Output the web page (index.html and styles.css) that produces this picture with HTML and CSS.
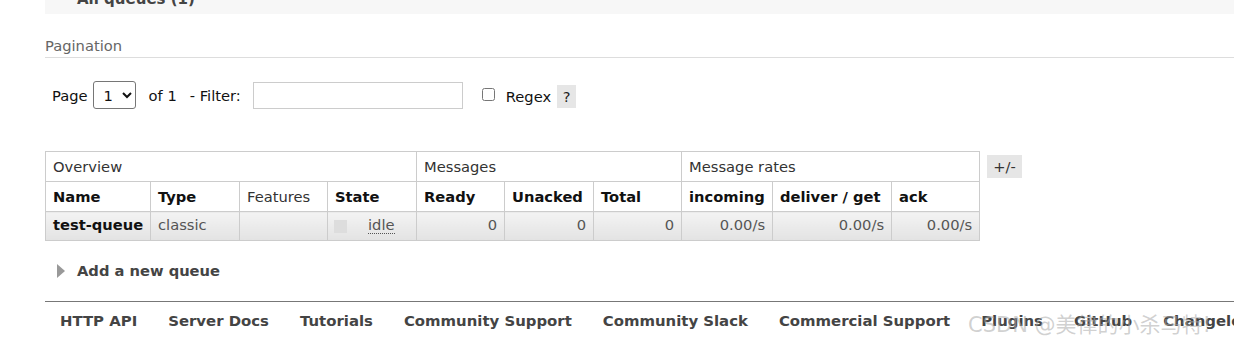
FILE: index.html
```html
<!DOCTYPE html>
<html lang="en">
<head>
    <meta charset="UTF-8">
    <title>Queues</title>
    <link rel="stylesheet" href="styles.css">
</head>
<body>
<div class="main">
    <div class="section-head">
        <h2><span class="tri-down"></span>All queues (1)</h2>
    </div>

    <h3 class="sub">Pagination</h3>

    <div class="filter-row">
        <span class="lbl">Page</span>
        <select class="page-sel">
            <option>1</option>
        </select>
        <span class="lbl of">of 1</span>
        <span class="lbl filt">- Filter:</span>
        <input type="text" class="filter-box">
        <input type="checkbox" class="regex-chk">
        <span class="lbl regex">Regex</span>
        <span class="help">?</span>
    </div>

    <div class="table-wrap">
        <table class="list">
            <colgroup>
                <col style="width:105px">
                <col style="width:89px">
                <col style="width:88px">
                <col style="width:89px">
                <col style="width:88px">
                <col style="width:89px">
                <col style="width:88px">
                <col style="width:91px">
                <col style="width:119px">
                <col style="width:88px">
            </colgroup>
            <thead>
            <tr class="group">
                <th colspan="4">Overview</th>
                <th colspan="3">Messages</th>
                <th colspan="3">Message rates</th>
            </tr>
            <tr class="cols">
                <th>Name</th>
                <th>Type</th>
                <th class="plain">Features</th>
                <th>State</th>
                <th>Ready</th>
                <th>Unacked</th>
                <th>Total</th>
                <th>incoming</th>
                <th>deliver / get</th>
                <th>ack</th>
            </tr>
            </thead>
            <tbody>
            <tr class="row">
                <td class="name">test-queue</td>
                <td>classic</td>
                <td></td>
                <td class="state"><span class="state-box"></span><abbr>idle</abbr></td>
                <td class="num">0</td>
                <td class="num">0</td>
                <td class="num">0</td>
                <td class="num">0.00/s</td>
                <td class="num">0.00/s</td>
                <td class="num">0.00/s</td>
            </tr>
            </tbody>
        </table>
        <span class="toggle">+/-</span>
    </div>

    <div class="add-queue"><span class="tri-right"></span>Add a new queue</div>

    <div class="footer">
        <a href="javascript:;">HTTP API</a>
        <a href="javascript:;">Server Docs</a>
        <a href="javascript:;">Tutorials</a>
        <a href="javascript:;">Community Support</a>
        <a href="javascript:;">Community Slack</a>
        <a href="javascript:;">Commercial Support</a>
        <a href="javascript:;">Plugins</a>
        <a href="javascript:;">GitHub</a>
        <a href="javascript:;">Changelog</a>
    </div>
</div>
<div class="watermark">CSDN @美律的小杀马特!</div>
</body>
</html>
```

FILE: styles.css
```css
*{
    margin:0;
    padding:0;
}
html,body{
    width:100%;
    height:100%;
    overflow:hidden;
}
body{
    font-family:"DejaVu Sans",Verdana,sans-serif;
    font-size:14.7px;
    color:#222;
    background:#fff;
    position:relative;
}
a{
    text-decoration:none;
}
.main{
    padding-left:45px;
}
.section-head{
    height:14px;
    overflow:hidden;
    background-color:#f7f7f7;
}
.section-head h2{
    font-size:15px;
    line-height:20px;
    margin-top:-11px;
    padding-left:32px;
    color:#444;
    position:relative;
}
.tri-down{
    position:absolute;
    left:11px;
    top:4px;
    border-left:5px solid transparent;
    border-right:5px solid transparent;
    border-top:7px solid #aaa;
}
.sub{
    margin-top:23px;
    font-size:14.7px;
    font-weight:normal;
    line-height:18px;
    color:#666;
    padding-bottom:2px;
    border-bottom:1px solid #ddd;
}
.filter-row{
    margin-top:23px;
    height:28px;
    display:flex;
    align-items:center;
    padding-left:7px;
}
.lbl{
    color:#111;
}
.page-sel{
    width:43px;
    height:28px;
    margin-left:5px;
    font-family:inherit;
    font-size:14.7px;
    padding-left:6px;
    border:1px solid #767676;
    border-radius:3px;
    background:#fff;
    color:#111;
}
.of{
    margin-left:13px;
}
.filt{
    margin-left:13px;
}
.filter-box{
    width:210px;
    height:27px;
    margin-left:12px;
    border:1px solid #ccc;
    box-sizing:border-box;
}
.regex-chk{
    width:13px;
    height:13px;
    margin-left:19px;
    margin-top:-2px;
}
.regex{
    margin-left:11px;
    margin-top:3px;
}
.help{
    margin-left:6px;
    margin-top:3px;
    width:19px;
    height:23px;
    line-height:23px;
    text-align:center;
    background-color:#e6e6e6;
    color:#222;
}
.table-wrap{
    margin-top:42px;
    display:flex;
    align-items:flex-start;
}
.list{
    border-collapse:collapse;
    table-layout:fixed;
    width:935px;
}
.list th,.list td{
    border:1px solid #ccc;
    padding:0 7px;
    text-align:left;
    white-space:nowrap;
    overflow:hidden;
}
.group th{
    height:29px;
    font-weight:normal;
    color:#333;
}
.cols th{
    height:28px;
    padding-bottom:1px;
    font-weight:bold;
    color:#111;
}
.cols th.plain{
    font-weight:normal;
    color:#333;
}
.row td{
    height:25px;
    padding-bottom:3px;
    color:#555;
    background:linear-gradient(#f3f3f3,#e3e3e3);
}
.row td.name{
    font-weight:bold;
    color:#111;
}
.row td.num{
    text-align:right;
}
.state-box{
    display:inline-block;
    width:13px;
    height:13px;
    background-color:#ddd;
    vertical-align:middle;
    margin-left:-1px;
    margin-right:21px;
}
.state abbr{
    text-decoration:none;
    border-bottom:1px dotted #555;
    color:#555;
}
.toggle{
    margin-left:7px;
    margin-top:4px;
    width:35px;
    height:23px;
    line-height:23px;
    text-align:center;
    background-color:#e6e6e6;
    color:#333;
}
.add-queue{
    margin-top:21px;
    line-height:18px;
    font-weight:bold;
    color:#444;
    padding-left:32px;
    position:relative;
}
.tri-right{
    position:absolute;
    left:12px;
    top:2px;
    border-top:7px solid transparent;
    border-bottom:7px solid transparent;
    border-left:8px solid #999;
}
.footer{
    margin-top:21px;
    border-top:1px solid #777;
    padding:10px 0 0 15px;
    display:flex;
    gap:31px;
    white-space:nowrap;
}
.footer a{
    font-weight:bold;
    font-size:14.9px;
    color:#444;
    line-height:18px;
}
.watermark{
    position:absolute;
    left:968px;
    top:308px;
    font-family:"DejaVu Sans","Noto Sans CJK SC",sans-serif;
    font-size:21px;
    color:rgba(170,170,170,.55);
    white-space:nowrap;
}
```
